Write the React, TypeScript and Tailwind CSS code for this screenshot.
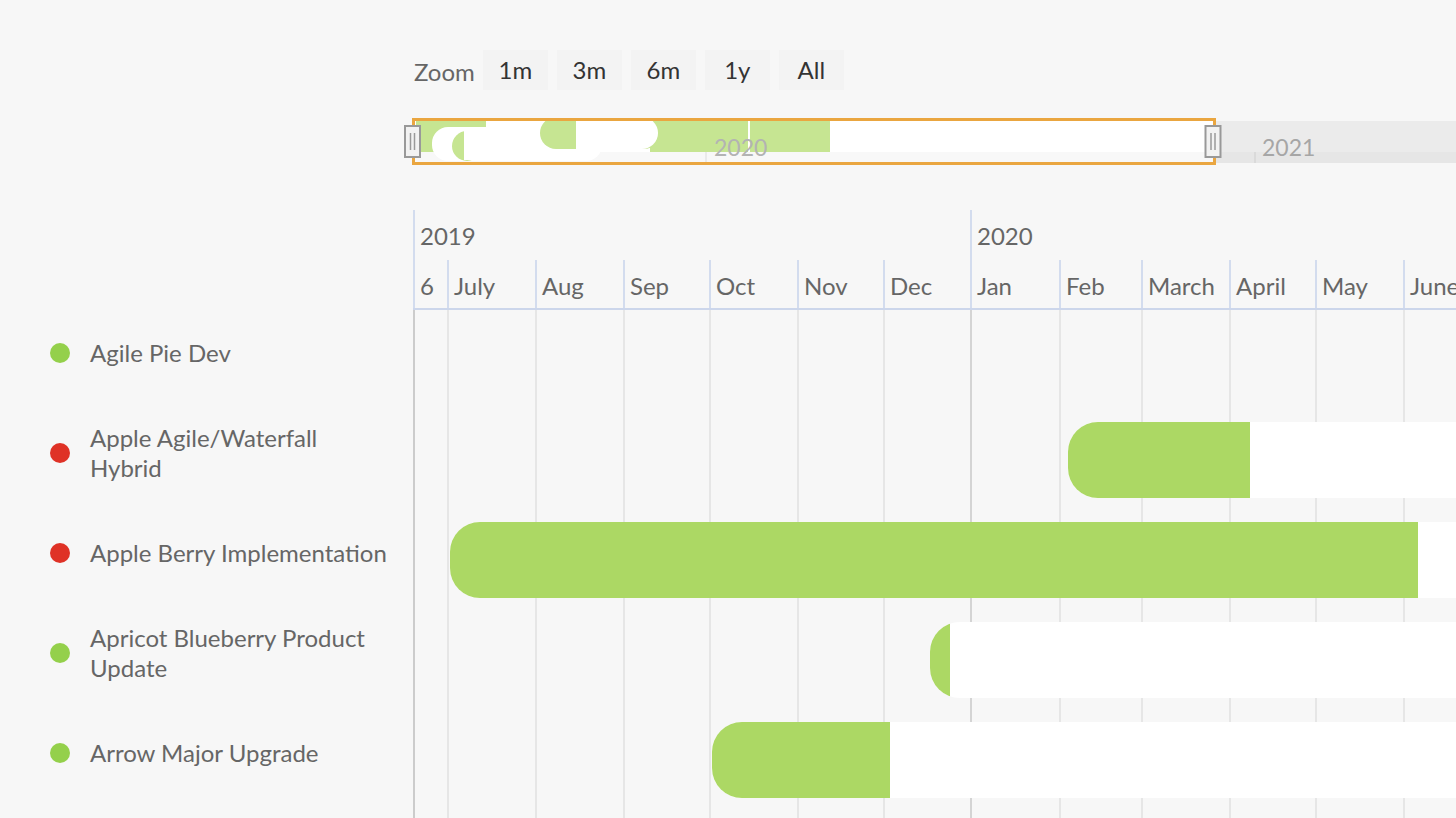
import React from "react";

const months = [
  { label: "6", w: 34 },
  { label: "July", w: 88 },
  { label: "Aug", w: 88 },
  { label: "Sep", w: 86 },
  { label: "Oct", w: 88 },
  { label: "Nov", w: 86 },
  { label: "Dec", w: 87 },
  { label: "Jan", w: 89 },
  { label: "Feb", w: 82 },
  { label: "March", w: 88 },
  { label: "April", w: 86 },
  { label: "May", w: 88 },
  { label: "June", w: 120 },
];

const tasks = [
  { name: "Agile Pie Dev", status: "green", bar: null },
  { name: "Apple Agile/Waterfall Hybrid", status: "red", bar: { left: 655, done: 182 } },
  { name: "Apple Berry Implementation", status: "red", bar: { left: 37, done: 968 } },
  { name: "Apricot Blueberry Product Update", status: "green", bar: { left: 517, done: 20 } },
  { name: "Arrow Major Upgrade", status: "green", bar: { left: 299, done: 178 } },
];

function Navigator() {
  const green = "#c6e592";
  return (
    <svg width="1056" height="60" viewBox="400 110 1056 60" className="block">
      <defs>
        <clipPath id="nav-clip">
          <rect x="415" y="121" width="798" height="42" />
        </clipPath>
      </defs>
      {/* outside the selected range */}
      <rect x="1214" y="121" width="242" height="42" fill="#ebebeb" />
      <rect x="1214" y="152" width="242" height="11" fill="#e6e6e6" />
      <line x1="1255" y1="152" x2="1255" y2="163" stroke="#d6d6d6" strokeWidth="1.5" />
      <text x="1262" y="156" fill="#a6a6a6" fontSize="23" fontFamily="Lato, sans-serif">
        2021
      </text>

      {/* selected range, mini series */}
      <g clipPath="url(#nav-clip)">
        <rect x="415" y="121" width="800" height="31" fill="#ffffff" />
        <rect x="415" y="152" width="800" height="11" fill="#f8f8f8" />
        <rect x="416" y="121" width="70" height="31" fill={green} />
        <rect x="432" y="127" width="170" height="34" rx="16" fill="#ffffff" />
        <rect x="452" y="131" width="30" height="30" rx="15" fill={green} />
        <rect x="464" y="128" width="120" height="32" fill="#ffffff" />
        <rect x="650" y="121" width="180" height="31" fill={green} />
        <rect x="540" y="117" width="120" height="32" rx="16" fill={green} />
        <rect x="576" y="117" width="82" height="32" rx="16" fill="#ffffff" />
        <rect x="576" y="117" width="30" height="32" fill="#ffffff" />
        <rect x="748" y="121" width="2" height="31" fill="#ffffff" />
        <line x1="706" y1="152" x2="706" y2="163" stroke="#e6e6e6" strokeWidth="1.5" />
        <text x="714" y="156" fill="#b3b3b3" fontSize="23" fontFamily="Lato, sans-serif">
          2020
        </text>
      </g>

      {/* range mask outline */}
      <rect x="413.5" y="119.5" width="801" height="44" fill="none" stroke="#eaa640" strokeWidth="3" />

      {/* handles */}
      {[412.5, 1213].map((cx) => (
        <g key={cx}>
          <rect x={cx - 7.5} y="126" width="15" height="31" fill="#f2f2f2" stroke="#999999" strokeWidth="2" />
          <line x1={cx - 2} y1="133" x2={cx - 2} y2="150" stroke="#999999" strokeWidth="1.5" />
          <line x1={cx + 2} y1="133" x2={cx + 2} y2="150" stroke="#999999" strokeWidth="1.5" />
        </g>
      ))}
    </svg>
  );
}

export default function App() {
  return (
    <div
      className="relative h-[818px] w-[1456px] overflow-hidden bg-[#f7f7f7] text-[#666666]"
      style={{ fontFamily: "Lato, 'Open Sans', sans-serif" }}
    >
      {/* range selector */}
      <div className="mt-[50px] flex h-[40px] items-center pl-[414px]">
        <span className="mr-[8px] mt-[4px] text-[24px]">Zoom</span>
        <div className="flex gap-[9px]">
          {["1m", "3m", "6m", "1y", "All"].map((b) => (
            <button
              key={b}
              type="button"
              className="flex h-[40px] w-[65px] items-center justify-center bg-[#f3f3f3] text-[24px] text-[#333333]"
            >
              {b}
            </button>
          ))}
        </div>
      </div>

      {/* navigator */}
      <div className="ml-[400px] mt-[20px]">
        <Navigator />
      </div>

      {/* gantt */}
      <div className="mt-[40px] flex">
        {/* labels */}
        <div className="w-[413px] shrink-0">
          <div className="h-[100px]" />
          {tasks.map((t) => (
            <div key={t.name} className="flex h-[100px] items-center pb-[14px] pl-[50px]">
              <span
                className={
                  "h-[20px] w-[20px] shrink-0 rounded-full " +
                  (t.status === "red" ? "bg-[#df3226]" : "bg-[#94d04b]")
                }
              />
              <span className="ml-[20px] w-[302px] text-[24px] leading-[30px]">{t.name}</span>
            </div>
          ))}
        </div>

        {/* chart */}
        <div className="w-[1043px] shrink-0 overflow-hidden">
          <div className="flex h-[50px] text-[24px]">
            <div className="flex w-[557px] shrink-0 items-center border-l-2 border-[#d3dcee] pl-[5px] pt-[2px]">2019</div>
            <div className="flex flex-1 items-center border-l-2 border-[#d3dcee] pl-[5px] pt-[2px]">2020</div>
          </div>
          <div className="flex h-[50px] border-b-2 border-[#ccd6eb] text-[24px]">
            {months.map((m) => (
              <div
                key={m.label}
                className="flex shrink-0 items-center border-l-2 border-[#d3dcee] pl-[5px] pt-[3px]"
                style={{ width: m.w }}
              >
                {m.label}
              </div>
            ))}
          </div>

          <div className="relative h-[540px]">
            {/* grid lines */}
            <div className="absolute inset-0 flex">
              {months.map((m, i) => (
                <div
                  key={m.label}
                  className={
                    "h-full shrink-0 border-l-2 " +
                    (i === 0 ? "border-[#cccccc]" : m.label === "Jan" ? "border-[#d4d4d4]" : "border-[#e6e6e6]")
                  }
                  style={{ width: m.w }}
                />
              ))}
            </div>

            {tasks.map((t) => (
              <div key={t.name} className="relative h-[100px]">
                {t.bar && (
                  <div
                    className="absolute top-[12px] flex h-[76px] w-[2000px] overflow-hidden rounded-l-[30px] bg-white"
                    style={{ left: t.bar.left }}
                  >
                    <div className="h-full bg-[#acd864]" style={{ width: t.bar.done }} />
                  </div>
                )}
              </div>
            ))}
          </div>
        </div>
      </div>
    </div>
  );
}
